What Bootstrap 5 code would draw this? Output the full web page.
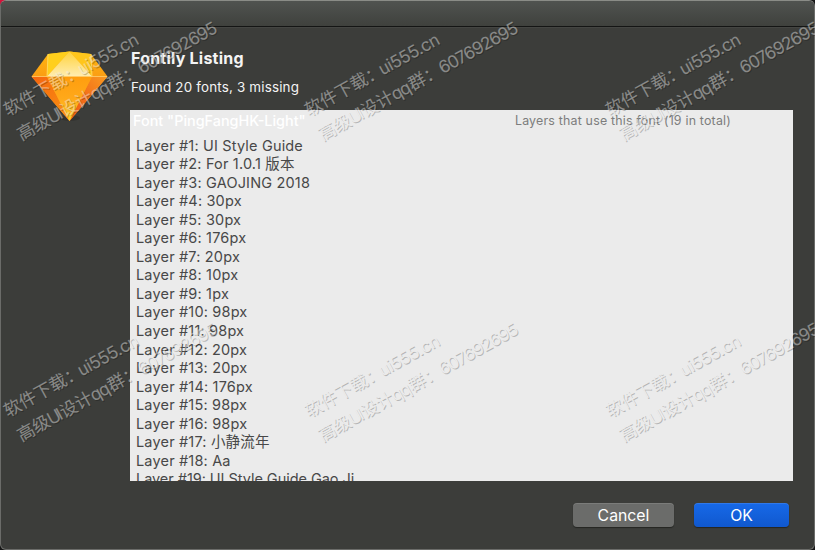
<!DOCTYPE html>
<html lang="en">
<head>
<meta charset="utf-8">
<title>Fontily Listing</title>
<meta name="viewport" content="width=device-width, initial-scale=1">
<link href="https://cdn.jsdelivr.net/npm/bootstrap@5.3.0/dist/css/bootstrap.min.css" rel="stylesheet">
<style>
html,body{height:100%}
html{background:#161616}
body{background:transparent;font-family:Inter,"Noto Sans CJK SC",sans-serif;overflow:hidden}
body::before{content:"";position:absolute;z-index:-1;left:0;top:0;width:5px;height:5px;background:#d5123a}
.dialog-window{height:550px;background:#3c3d3a;border:1px solid #6b6c69;border-top-color:#8a8c87;border-radius:6px}
.title-strip{height:26px;flex:none;background:linear-gradient(#505350,#3f413d);border-bottom:1px solid #141514;border-radius:5px 5px 0 0;box-shadow:0 1px 0 #444542}
.dialog-content{padding:21px 21px 0 30px}
.app-logo{width:99px;flex:none}
.heading-text{font-size:16px;line-height:20px;letter-spacing:.22px;font-weight:700;color:#f4f4f4;padding-left:1px}
.summary-text{font-size:13.4px;line-height:18px;letter-spacing:.18px;color:#f4f4f4;margin-top:10px;padding-left:1px}
.font-panel{height:371px;margin-top:14px;background:#ebebeb;color:#484848}
.panel-head{height:22px;padding:0 62px 0 3px}
.font-name{font-size:14.4px;line-height:22px;color:#fff;font-weight:500}
.usage-note{font-size:12.4px;line-height:22px;letter-spacing:.2px;color:#7d7d7d;white-space:nowrap}
.layer-list{font-size:14.5px;letter-spacing:.17px;line-height:18.55px;padding:4.500px 0 0 6px}
.layer-list li{height:18.55px;white-space:nowrap}
.layer-list li:last-child{letter-spacing:-.04px}
.dialog-actions{padding:22px 25px 0 0;gap:20px}
.dialog-actions .btn{height:24px;padding:1px 0 0;font-size:15.8px;line-height:24px;border:0;border-radius:4px;color:#fff;box-shadow:0 1px 1px #242522,inset 0 1px 0 #ffffff1c}
.btn-dismiss,.btn-dismiss:hover{width:101px;background:#6b6c6a}
.btn-accept,.btn-accept:hover{width:95px;background:linear-gradient(#1769e8,#1058ce)}
.stamp-layer{inset:0;pointer-events:none}
</style>
</head>
<body>
<main class="dialog-window d-flex flex-column">
  <header class="title-strip"></header>
  <section class="dialog-content d-flex">
    <div class="app-logo">
      <svg width="80" height="76" viewBox="0 0 80 76">
        <defs>
          <linearGradient id="g1" x1="0" y1="0" x2="0" y2="1"><stop offset="0" stop-color="#ffb80f"/><stop offset=".4" stop-color="#fa9a14"/></linearGradient>
          <linearGradient id="g2" x1="0" y1="0" x2="0" y2="1"><stop offset="0" stop-color="#ff9d0e"/><stop offset=".5" stop-color="#ffa91a"/><stop offset="1" stop-color="#ffd02c"/></linearGradient>
          <linearGradient id="g3" x1="0" y1="0" x2="1" y2="1"><stop offset="0" stop-color="#f5640f"/><stop offset="1" stop-color="#f99512"/></linearGradient>
          <linearGradient id="g4" x1="0" y1="0" x2="0" y2="1"><stop offset="0" stop-color="#ffd23c"/><stop offset="1" stop-color="#ffedb0"/></linearGradient>
          <linearGradient id="g5" x1="1" y1="0" x2="0" y2="1"><stop offset="0" stop-color="#f99a20"/><stop offset=".5" stop-color="#f3701a"/><stop offset="1" stop-color="#ee5a10"/></linearGradient>
        </defs>
        <ellipse cx="39" cy="70" rx="10" ry="3" fill="#222" opacity=".35"/>
        <path d="M.5 28.500 17 6 38.500 3.500 60 6 76.500 28.500 38.500 73Z" fill="url(#g1)"/>
        <path d="M17 6 38.500 3.500 16 28.500Z" fill="#ffcf1c"/>
        <path d="M60 6 38.500 3.500 61 28.500Z" fill="#ffc61c"/>
        <path d="M38.500 3.500 61 28.500H16Z" fill="url(#g4)"/>
        <path d="M.5 28.500H16L38.500 73Z" fill="url(#g3)"/>
        <path d="M76.500 28.500H61L38.500 73Z" fill="url(#g5)"/>
        <path d="M16 28.500H61L38.500 73Z" fill="url(#g2)"/>
        <path d="M1 28.500H76" stroke="#ffcf70" stroke-width=".8"/>
        <path d="M17 6 16 28.500M60 6 61 28.500" stroke="#ffe27a" stroke-width=".7"/>
      </svg>
    </div>
    <div class="flex-grow-1">
      <h1 class="heading-text mb-0">Fontily Listing</h1>
      <p class="summary-text mb-0">Found 20 fonts, 3 missing</p>
      <div class="font-panel overflow-hidden">
        <div class="panel-head d-flex justify-content-between">
          <span class="font-name">Font "PingFangHK-Light"</span>
          <span class="usage-note">Layers that use this font (19 in total)</span>
        </div>
        <ul class="layer-list list-unstyled mb-0">
          <li>Layer #1: UI Style Guide</li>
          <li>Layer #2: For 1.0.1 版本</li>
          <li>Layer #3: GAOJING 2018</li>
          <li>Layer #4: 30px</li>
          <li>Layer #5: 30px</li>
          <li>Layer #6: 176px</li>
          <li>Layer #7: 20px</li>
          <li>Layer #8: 10px</li>
          <li>Layer #9: 1px</li>
          <li>Layer #10: 98px</li>
          <li>Layer #11: 98px</li>
          <li>Layer #12: 20px</li>
          <li>Layer #13: 20px</li>
          <li>Layer #14: 176px</li>
          <li>Layer #15: 98px</li>
          <li>Layer #16: 98px</li>
          <li>Layer #17: 小静流年</li>
          <li>Layer #18: Aa</li>
          <li>Layer #19: UI Style Guide Gao Ji</li>
        </ul>
      </div>
    </div>
  </section>
  <footer class="dialog-actions d-flex justify-content-end">
    <button type="button" class="btn btn-dismiss">Cancel</button>
    <button type="button" class="btn btn-accept">OK</button>
  </footer>
</main>
<svg class="stamp-layer position-absolute" width="815" height="550" font-family="Inter, 'Noto Sans CJK SC', sans-serif" font-size="17.300">
  <defs>
    <g id="stamp-lines">
      <g transform="translate(8 116.500) rotate(-29)">
        <text>软件下载：</text>
        <text x="84" textLength="67">ui555.cn</text>
      </g>
      <g transform="translate(21.500 141) rotate(-29)">
        <text>高级</text>
        <text x="34" textLength="15">UI</text>
        <text x="48.500">设计</text>
        <text x="83" textLength="20">qq</text>
        <text x="103">群：</text>
        <text x="137.500" textLength="88">607692695</text>
      </g>
    </g>
    <g id="stamp" opacity=".44">
      <use href="#stamp-lines" x="1" y="1" fill="#000" fill-opacity=".5"/>
      <use href="#stamp-lines" fill="#ececec"/>
    </g>
  </defs>
  <use href="#stamp"/>
  <use href="#stamp" x="301"/>
  <use href="#stamp" x="602"/>
  <use href="#stamp" y="301"/>
  <use href="#stamp" x="301" y="301"/>
  <use href="#stamp" x="602" y="301"/>
</svg>
<script src="https://cdn.jsdelivr.net/npm/bootstrap@5.3.0/dist/js/bootstrap.bundle.min.js"></script>
</body>
</html>
